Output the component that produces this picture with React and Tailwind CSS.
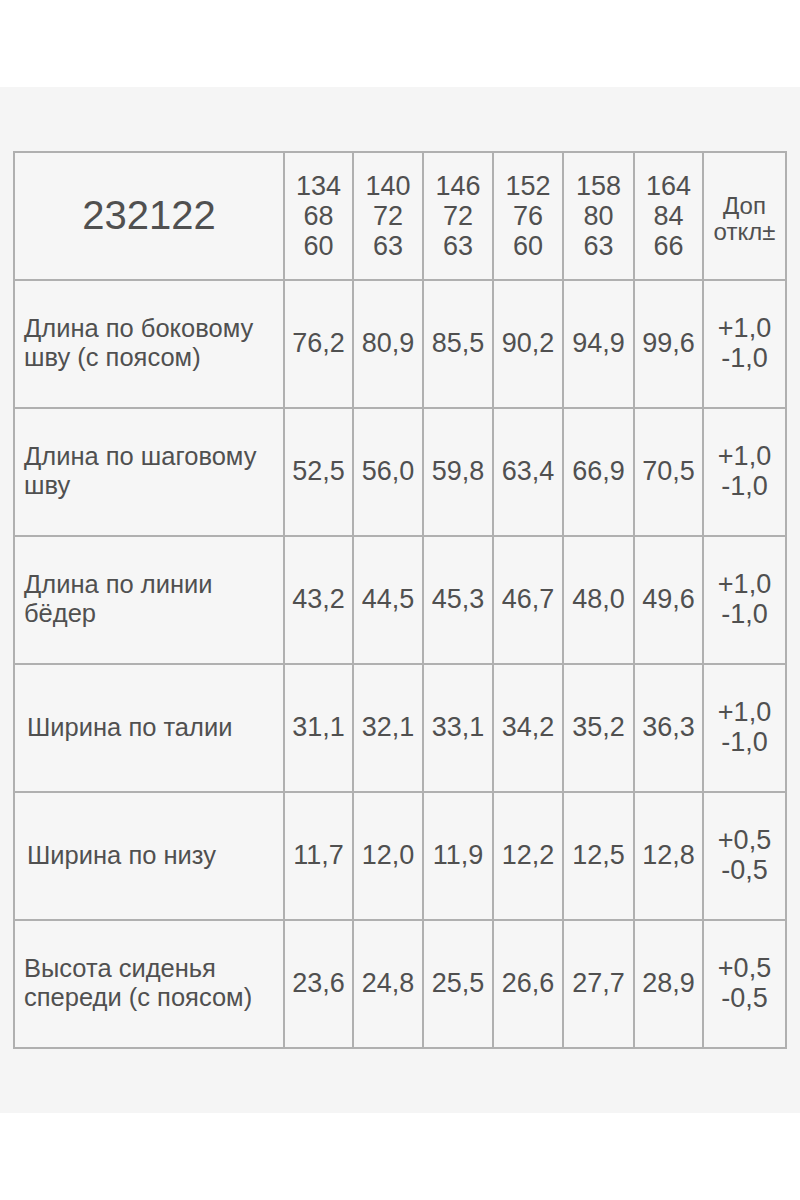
import React from 'react';

const sizes = [
  ['134', '68', '60'],
  ['140', '72', '63'],
  ['146', '72', '63'],
  ['152', '76', '60'],
  ['158', '80', '63'],
  ['164', '84', '66'],
];

const rows = [
  { name: ['Длина по боковому', 'шву (с поясом)'], values: ['76,2', '80,9', '85,5', '90,2', '94,9', '99,6'], tol: ['+1,0', '-1,0'] },
  { name: ['Длина по шаговому', 'шву'], values: ['52,5', '56,0', '59,8', '63,4', '66,9', '70,5'], tol: ['+1,0', '-1,0'] },
  { name: ['Длина по линии', 'бёдер'], values: ['43,2', '44,5', '45,3', '46,7', '48,0', '49,6'], tol: ['+1,0', '-1,0'] },
  { name: ['Ширина по талии'], values: ['31,1', '32,1', '33,1', '34,2', '35,2', '36,3'], tol: ['+1,0', '-1,0'], indent: true },
  { name: ['Ширина по низу'], values: ['11,7', '12,0', '11,9', '12,2', '12,5', '12,8'], tol: ['+0,5', '-0,5'], indent: true },
  { name: ['Высота сиденья', 'спереди (с поясом)'], values: ['23,6', '24,8', '25,5', '26,6', '27,7', '28,9'], tol: ['+0,5', '-0,5'] },
];

const cell = 'bg-[#f6f6f6] flex items-center justify-center text-center';

const App = () => {
  return (
    <div className="w-[800px] h-[1200px] bg-white text-[#505050] font-['Liberation_Sans',Arial,sans-serif]">
      <div className="h-[87px] bg-white" />
      <div className="h-[1026px] bg-[#f5f5f5] pt-[64px] pl-[13px]">
        <div className="w-[774px] grid grid-cols-[268px_67px_68px_68px_68px_69px_67px_81px] grid-rows-[126px_repeat(6,126px)] gap-[2px] p-[2px] bg-[#b0b0b0]">
          {/* header */}
          <div className={cell + ' text-[40px] leading-none pb-[2px]'}>232122</div>
          {sizes.map((s) => (
            <div key={s[0]} className={cell + ' flex-col text-[27px] leading-[30px]'}>
              {s.map((v, i) => (
                <span key={i}>{v}</span>
              ))}
            </div>
          ))}
          <div className={cell + ' flex-col text-[24px] leading-[26px] pt-[6px]'}>
            <span>Доп</span>
            <span>откл±</span>
          </div>

          {/* rows */}
          {rows.map((r, idx) => (
            <React.Fragment key={idx}>
              <div className={'bg-[#f6f6f6] flex flex-col justify-center text-[25.5px] leading-[29px] pb-[2px] ' + (r.indent ? 'pl-[12px]' : 'pl-[9px]')}>
                {r.name.map((n, i) => (
                  <span key={i}>{n}</span>
                ))}
              </div>
              {r.values.map((v, i) => (
                <div key={i} className={cell + ' text-[27px] leading-none pb-[2px]'}>
                  {v}
                </div>
              ))}
              <div className={cell + ' flex-col text-[27px] leading-[30px] pb-[2px]'}>
                <span>{r.tol[0]}</span>
                <span>{r.tol[1]}</span>
              </div>
            </React.Fragment>
          ))}
        </div>
      </div>
    </div>
  );
};

export default App;
